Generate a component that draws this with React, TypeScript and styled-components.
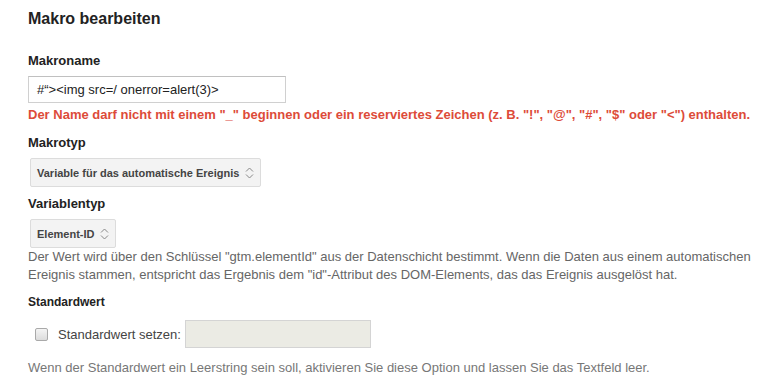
import React from "react";
import styled, { createGlobalStyle } from "styled-components";

const GlobalStyle = createGlobalStyle`
	html, body {
		margin: 0;
		padding: 0;
		background: #fff;
	}
	body {
		font-family: "Liberation Sans", Arial, sans-serif;
		color: #222;
	}
`;

const PageSC = styled.div`
	width: 772px;
	height: 384px;
	padding: 9px 0 0 28px;
	box-sizing: border-box;
	overflow: hidden;
`;

const TitleSC = styled.h2`
	margin: 0 0 24px;
	font-size: 16px;
	font-weight: bold;
	line-height: 20px;
	color: #222;
`;

const SectionSC = styled.div<{ $gap?: number }>`
	margin-bottom: ${(p) => p.$gap ?? 0}px;
`;

const LabelSC = styled.div<{ $size?: number; $space?: number }>`
	font-size: ${(p) => p.$size ?? 13}px;
	font-weight: bold;
	line-height: 16px;
	color: #222;
	margin-bottom: ${(p) => p.$space ?? 7}px;
`;

const TextInputSC = styled.div`
	width: 258px;
	height: 27px;
	box-sizing: border-box;
	border: 1px solid #d0d0d0;
	border-top-color: #c0c0c0;
	padding: 0 8px;
	font-size: 13px;
	line-height: 25px;
	color: #222;
`;

const ErrorSC = styled.div`
	margin-top: 4px;
	font-size: 13px;
	font-weight: bold;
	line-height: 16px;
	color: #dd4b39;
	white-space: nowrap;
`;

const SelectSC = styled.div`
	display: inline-flex;
	align-items: center;
	gap: 6px;
	height: 29px;
	margin-left: 2px;
	box-sizing: border-box;
	padding: 0 6px;
	background: #f3f3f3;
	border: 1px solid #dcdcdc;
	border-radius: 2px;
	font-size: 11px;
	font-weight: bold;
	color: #444;
`;

const HelpSC = styled.div<{ $color?: string }>`
	font-size: 13px;
	line-height: 18px;
	color: ${(p) => p.$color ?? "#666"};
`;

const CheckRowSC = styled.div`
	display: flex;
	align-items: center;
	height: 28px;
	padding-left: 7px;
	margin-bottom: 11px;
`;

const CheckboxSC = styled.span`
	width: 11px;
	height: 11px;
	border: 1px solid #a9a9a9;
	border-radius: 2px;
	background: linear-gradient(#f4f4f4, #dcdcdc);
	margin-right: 10px;
`;

const CheckLabelSC = styled.span`
	font-size: 13px;
	color: #444;
	margin-right: 4px;
`;

const DisabledInputSC = styled.div`
	width: 186px;
	height: 28px;
	box-sizing: border-box;
	border: 1px solid #d4d4d4;
	background: #ebebe4;
`;

const Arrows = () => (
	<svg width="9" height="14" viewBox="0 0 9 14" fill="none" stroke="#888" strokeWidth="1">
		<path d="M1 5.5 L4.5 2 L8 5.5" />
		<path d="M1 8.5 L4.5 12 L8 8.5" />
	</svg>
);

const App = () => {
	return (
		<>
			<GlobalStyle />
			<PageSC>
				<TitleSC>Makro bearbeiten</TitleSC>

				<SectionSC $gap={12}>
					<LabelSC>Makroname</LabelSC>
					<TextInputSC>#“&gt;&lt;img src=/ onerror=alert(3)&gt;</TextInputSC>
					<ErrorSC>
						Der Name darf nicht mit einem "_" beginnen oder ein reserviertes Zeichen (z. B. "!", "@", "#", "$" oder "&lt;") enthalten.
					</ErrorSC>
				</SectionSC>

				<SectionSC $gap={9}>
					<LabelSC>Makrotyp</LabelSC>
					<SelectSC>
						Variable für das automatische Ereignis
						<Arrows />
					</SelectSC>
				</SectionSC>

				<SectionSC $gap={10}>
					<LabelSC>Variablentyp</LabelSC>
					<SelectSC>
						Element-ID
						<Arrows />
					</SelectSC>
					<HelpSC>
						Der Wert wird über den Schlüssel "gtm.elementId" aus der Datenschicht bestimmt. Wenn die Daten aus einem automatischen
						<br />
						Ereignis stammen, entspricht das Ergebnis dem "id"-Attribut des DOM-Elements, das das Ereignis ausgelöst hat.
					</HelpSC>
				</SectionSC>

				<SectionSC>
					<LabelSC $size={12} $space={10}>Standardwert</LabelSC>
					<CheckRowSC>
						<CheckboxSC />
						<CheckLabelSC>Standardwert setzen:</CheckLabelSC>
						<DisabledInputSC />
					</CheckRowSC>
					<HelpSC $color="#777">
						Wenn der Standardwert ein Leerstring sein soll, aktivieren Sie diese Option und lassen Sie das Textfeld leer.
					</HelpSC>
				</SectionSC>
			</PageSC>
		</>
	);
};

export default App;
